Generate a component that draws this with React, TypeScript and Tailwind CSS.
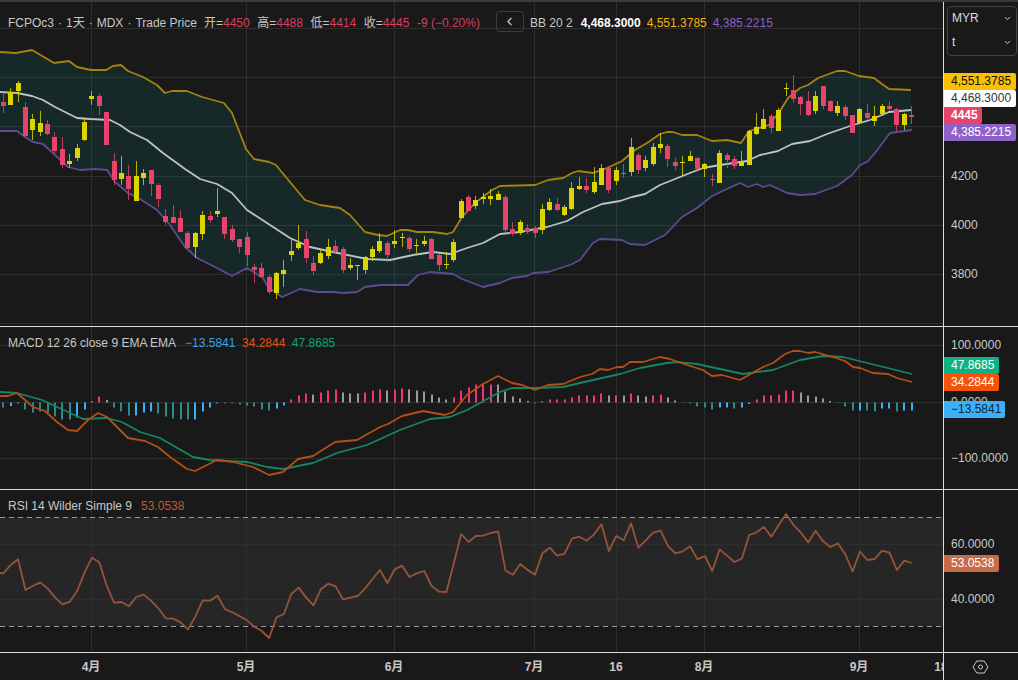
import { ChevronDown, ChevronLeft } from "lucide-react";
import React from "react";

const xAt = (i: number) => 3.3 + 7.385 * i;
const toPath = (pts: number[][]) => pts.map((p) => p.join(",")).join(" ");

// candles: colour, body top, body bottom, wick top, wick bottom (page pixels)
const candles =
  "r102,106,92,113 y92,105,88,105 y83,91,81,102 r107,136,102,137 y119,130,114,140 y123,132,111,136 r124,134,120,135 r137,151,132,154 r149,165,137,168 y161,164,154,168 y148,158,144,161 y122,140,118,141 y96,99,91,105 r96,106,94,115 r112,145,112,145 r161,180,153,185 y173,179,156,185 r176,189,165,200 y176,201,161,201 y173,178,169,185 r170,184,170,196 r185,199,183,207 r216,222,209,225 r217,223,205,223 r218,232,210,232 r233,248,231,249 y233,247,232,258 y215,234,211,240 r216,220,211,223 y211,214,188,217 r217,234,217,239 r229,240,225,242 r239,247,239,253 r237,255,232,266 r267,270,264,283 r268,277,263,277 r277,292,275,294 y273,293,272,299 y270,274,260,287 y251,255,239,261 y243,248,225,250 r239,258,231,263 r263,271,256,275 y253,263,250,264 y247,256,239,259 r246,252,240,253 r249,270,247,273 y265,268,258,270 y265,266,265,280 y257,270,256,274 y249,257,246,261 y241,251,233,253 r243,255,241,262 y241,244,230,248 y237,238,233,247 r238,249,236,252 y245,246,239,253 y241,244,236,246 r239,259,238,259 r255,265,254,271 y264,265,252,269 y242,260,239,262 y201,218,199,218 r197,211,195,211 y200,206,196,209 y197,199,193,204 y196,199,189,205 y194,200,191,200 r197,230,195,232 r229,234,222,236 y222,233,220,235 r228,232,224,234 r228,233,226,238 y209,230,204,234 y202,210,198,211 r204,210,198,211 y207,215,205,216 y188,209,182,210 y186,189,177,190 r186,190,178,193 y182,192,167,194 y168,185,164,185 r168,190,167,193 y170,181,167,185 r173,174,164,178 y147,172,138,176 r155,170,153,174 y160,168,156,171 y147,164,143,166 y144,148,133,153 r146,159,144,167 r162,166,158,170 y162,163,156,176 y156,161,151,161 r158,169,157,170 y164,169,163,177 r179,180,174,186 y153,183,150,183 r155,160,153,168 r159,166,156,169 y162,166,151,166 y131,165,130,165 y127,134,113,135 y119,129,109,129 r116,128,114,133 y110,131,108,131 y88,89,83,96 r90,99,75,103 r97,104,96,115 r101,115,91,116 y96,111,91,114 r86,106,86,109 r101,111,100,112 y106,113,101,116 r107,116,105,120 r115,133,115,133 y109,123,108,123 r113,118,104,120 y116,121,106,126 y106,114,104,116 r106,109,101,111 r109,125,108,132 y114,125,113,130 r115,117,106,124"
    .split(" ")
    .map((c, i) => {
      const [top, bottom, high, low] = c.slice(1).split(",").map(Number);
      return { x: Math.floor(xAt(i)) + 0.5, color: c[0] === "r" ? "#e8436a" : "#dcd400", top, bottom, high, low };
    });

const upper = [[0,52],[16,53],[32,50],[54,63],[69,61],[77,67],[91,70],[106,70],[113,66],[121,65],[128,71],[143,77],[157,85],[165,93],[172,91],[187,91],[202,97],[224,103],[232,113],[246,149],[254,159],[269,162],[276,165],[280,170],[305,200],[320,205],[340,208],[350,215],[365,232],[378,235],[387,236],[400,230],[408,230],[417,232],[433,232],[447,234],[453,232],[462,217],[475,203],[492,190],[500,186],[535,185],[548,180],[563,178],[572,173],[578,171],[593,173],[607,168],[622,161],[635,150],[647,143],[660,134],[667,132],[673,132],[682,135],[697,135],[712,141],[727,140],[741,143],[749,131],[769,125],[780,111],[788,98],[800,88],[808,85],[818,78],[837,71],[845,71],[859,76],[874,78],[882,84],[889,89],[911,90]];
const middle = [[0,92],[17,93],[32,96],[43,100],[55,107],[77,118],[90,119],[110,120],[120,125],[130,132],[147,140],[163,153],[185,169],[200,179],[217,184],[232,193],[247,210],[267,223],[290,238],[310,247],[333,252],[367,259],[390,260],[413,255],[433,252],[450,254],[467,248],[483,243],[500,234],[520,232],[547,227],[567,221],[583,212],[602,204],[620,201],[632,197],[645,194],[660,185],[690,173],[703,168],[720,165],[747,161],[760,155],[778,151],[792,144],[810,141],[827,134],[850,126],[870,120],[889,112],[911,110]];
const lower = [[0,131],[17,131],[25,137],[33,142],[43,144],[55,155],[68,167],[80,170],[95,169],[107,170],[115,182],[128,193],[140,199],[157,210],[170,225],[185,247],[197,258],[217,268],[232,276],[247,268],[263,278],[268,287],[282,297],[300,289],[317,292],[333,292],[343,293],[357,292],[365,287],[380,285],[408,285],[418,275],[430,272],[453,274],[462,279],[483,287],[500,283],[512,278],[527,276],[533,273],[548,272],[570,265],[580,260],[593,243],[600,239],[622,240],[630,244],[645,245],[665,235],[682,217],[697,208],[712,196],[727,189],[740,183],[748,187],[757,184],[763,187],[770,185],[787,193],[800,195],[815,194],[837,186],[852,175],[860,165],[867,162],[875,153],[890,133],[912,130]];

const macdLine = [[0,396],[8,396],[17,393],[25,400],[33,407],[45,411],[57,422],[68,430],[77,431],[88,420],[98,413],[107,417],[117,427],[128,438],[145,441],[158,447],[170,457],[187,469],[195,471],[217,460],[233,462],[253,467],[269,475],[283,472],[298,459],[313,456],[335,442],[357,440],[380,427],[388,424],[402,416],[423,411],[445,415],[453,412],[467,395],[483,384],[498,376],[512,383],[522,385],[535,390],[548,385],[563,384],[580,377],[592,374],[600,369],[608,370],[617,367],[623,367],[630,362],[643,362],[660,357],[670,359],[687,365],[703,370],[712,376],[722,375],[740,380],[763,367],[773,363],[785,354],[793,351],[800,351],[808,353],[815,352],[833,357],[845,361],[853,367],[860,368],[873,373],[888,374],[897,378],[912,382]];
const signalLine = [[0,392],[17,393],[42,400],[55,406],[83,419],[107,418],[122,422],[140,432],[160,438],[193,457],[210,460],[247,462],[267,467],[283,469],[313,463],[337,453],[367,445],[400,430],[430,419],[450,417],[467,410],[500,392],[512,388],[535,388],[563,387],[580,383],[620,374],[640,368],[667,363],[677,362],[697,364],[743,374],[773,370],[800,360],[823,356],[843,357],[912,374]];

const histColors: Record<string, string> = { t: "#2a8a8c", s: "#38b0f8", p: "#f0337a", g: "#9a9a9a" };
const hist =
  "t5 s3.5 s1 t7 t10 t9 t10 t14 t17 t17 s15 s7 p-1.5 p-6 g-2.5 t5 t9 t13 s13 s10 s9 t11 t14 t16 t17 t17 s17 s9 s5 s1 t1 t1 t2 t3 t4 t7 t8 s6 s3 p-3 p-7 p-9 g-8 p-10 p-12 p-13 g-10 g-9 g-9 p-10 p-12 p-13 g-12 p-13 p-14 g-13 g-12 g-11 g-8 g-5 g-3 p-5 p-12 p-15 p-18 p-19 p-18 g-18 g-11 g-6 g-4 g-1.5 t1 p-1.5 p-3 p-3 p-3 p-5 p-7 p-7 p-7 p-9 g-7 p-7 g-7 p-9 g-7 g-6 p-7 p-8 g-5 g-2 t0.5 t1 t4 t5 t7 s5 s5 t6 s5 s1.5 p-3 p-7 p-7 p-8 p-12 p-12 g-10 g-7 g-6 g-4 g-1.5 t0.5 t4 t8 s8 t8 t9 s6 s6 t9 s8 s8"
    .split(" ")
    .map((h, i) => ({ x: Math.round(xAt(i)), color: histColors[h[0]], value: Number(h.slice(1)) }));

const rsiRaw = [250,225,208,300,288,277,295,322,343,335,303,248,203,217,287,338,336,349,321,314,332,355,385,386,397,418,380,331,332,317,357,367,379,391,410,423,444,382,372,312,293,322,346,298,281,289,328,323,318,295,267,240,279,238,227,261,250,243,288,305,306,220,132,156,138,137,129,124,242,254,222,240,254,190,173,197,191,146,140,152,133,103,183,138,151,100,173,151,128,122,168,190,184,169,208,198,243,178,197,216,206,135,127,111,140,105,72,105,128,157,122,154,171,160,192,244,185,210,207,182,188,240,212,219];
const rsiLine = [[0, 573], ...rsiRaw.map((v, i) => [xAt(i), 490 + v / 3])];

const vGrid = [91.5, 246.5, 394.5, 534.5, 616.5, 704.5, 859.5];

const Grid = ({ rows, top, bottom }: { rows: number[]; top: number; bottom: number }) => (
  <g stroke="#2e2e2e" strokeWidth="1">
    {vGrid.map((x) => (
      <line key={x} x1={x} x2={x} y1={top} y2={bottom} />
    ))}
    {rows.map((y) => (
      <line key={y} x1="0" x2="943" y1={y} y2={y} />
    ))}
  </g>
);

const Curve = ({ pts, color }: { pts: number[][]; color: string }) => (
  <polyline points={toPath(pts)} fill="none" stroke={color} strokeWidth="1.8" strokeLinejoin="round" />
);

const AxisText = ({ className, children }: { className: string; children: React.ReactNode }) => (
  <div className={`absolute left-[7px] h-4 leading-4 text-[#c8c8c8] ${className}`}>{children}</div>
);

const Tag = ({ className, children }: { className: string; children: React.ReactNode }) => (
  <div className={`absolute left-0 h-[17px] leading-[17px] pl-[7px] rounded-r-[2px] ${className}`}>{children}</div>
);

const Ohlc = ({ label, value }: { label: string; value: string }) => (
  <span>
    {label}=<span className="text-[#d63f60]">{value}</span>
  </span>
);

export default function App() {
  return (
    <div className="w-[1018px] h-[680px] overflow-hidden flex flex-col bg-[#191919] text-[12px] text-[#c8c8c8] [font-family:'Liberation_Sans','Noto_Sans_CJK_SC',sans-serif]">
      <div className="h-[2px] bg-[#3a3a3a]" />

      {/* price pane */}
      <div className="h-[325px] flex border-b border-[#dddddd]">
        <div className="relative w-[944px] border-r border-[#dddddd]">
          <svg width="943" height="324" viewBox="0 2 943 324" className="block">
            <Grid rows={[28.5, 77.5, 126.5, 176.5, 225.5, 274.5, 323.5]} top={2} bottom={326} />
            <polygon points={toPath([...upper, ...[...lower].reverse()])} fill="#147a84" fillOpacity="0.16" />
            <Curve pts={upper} color="#a5830f" />
            <Curve pts={lower} color="#5e4a90" />
            <Curve pts={middle} color="#b9c5c4" />
            {candles.map((c) => (
              <g key={c.x} fill={c.color}>
                <rect x={c.x - 0.5} y={c.high} width="1" height={c.low - c.high} fillOpacity="0.8" />
                <rect x={c.x - 2.5} y={c.top} width="5" height={Math.max(c.bottom - c.top, 1)} />
              </g>
            ))}
          </svg>
          <div className="absolute left-2 top-[10px] h-[21px] flex items-center whitespace-nowrap">
            <span>FCPOc3</span>
            <span className="mx-1">·</span>
            <span>1天</span>
            <span className="mx-1">·</span>
            <span>MDX</span>
            <span className="mx-1">·</span>
            <span>Trade Price</span>
            <span className="ml-[7px] flex gap-[7.5px]">
              <Ohlc label="开" value="4450" />
              <Ohlc label="高" value="4488" />
              <Ohlc label="低" value="4414" />
              <Ohlc label="收" value="4445" />
              <span className="text-[#d63f60]">-9 (−0.20%)</span>
            </span>
            <button className="ml-4 w-[28px] h-[21px] -translate-y-px flex items-center justify-center rounded-[3px] border border-[#3c3c3c] text-[#d0d0d0]">
              <ChevronLeft size={13} strokeWidth={2} />
            </button>
            <span className="ml-[6px]">BB 20 2</span>
            <span className="ml-2 font-bold text-white">4,468.3000</span>
            <span className="ml-[6px] text-[#f5b70a]">4,551.3785</span>
            <span className="ml-[6px] text-[#8e63c8]">4,385.2215</span>
          </div>
        </div>
        <div className="relative flex-1">
          <div className="absolute left-[3px] top-[4px] w-[70px] h-[50px] flex flex-col gap-1 px-1 py-[1px] rounded-[4px] border border-[#444444] text-[#d8dde5]">
            <div className="flex items-center justify-between h-5">
              <span>MYR</span>
              <ChevronDown size={9} strokeWidth={2.5} />
            </div>
            <div className="flex items-center justify-between h-5">
              <span>t</span>
              <ChevronDown size={9} strokeWidth={2.5} />
            </div>
          </div>
          <AxisText className="top-[166px]">4200</AxisText>
          <AxisText className="top-[215px]">4000</AxisText>
          <AxisText className="top-[264px]">3800</AxisText>
          <Tag className="top-[71px] w-[72px] bg-[#fcc000] text-[#111111]">4,551.3785</Tag>
          <Tag className="top-[88px] w-[72px] bg-white text-[#333333]">4,468.3000</Tag>
          <Tag className="top-[105px] w-[38px] bg-[#e8436a] text-white font-bold">4445</Tag>
          <Tag className="top-[122px] w-[72px] bg-[#8e63c8] text-white">4,385.2215</Tag>
        </div>
      </div>

      {/* macd pane */}
      <div className="h-[163px] flex border-b border-[#dddddd]">
        <div className="relative w-[944px] border-r border-[#dddddd]">
          <svg width="943" height="162" viewBox="0 327 943 162" className="block">
            <Grid rows={[345.5, 402.5, 458.5]} top={327} bottom={489} />
            {hist.map((b) => (
              <rect
                key={b.x}
                x={b.x - 1}
                y={b.value < 0 ? 402.5 + b.value : 402.5}
                width="2"
                height={Math.abs(b.value)}
                fill={b.color}
              />
            ))}
            <Curve pts={signalLine} color="#178562" />
            <Curve pts={macdLine} color="#b34f16" />
          </svg>
          <div className="absolute left-2 top-2 h-4 leading-4 flex gap-[6.5px] whitespace-nowrap">
            <span className="mr-[2.5px]">MACD 12 26 close 9 EMA EMA</span>
            <span className="text-[#3aa0e8]">−13.5841</span>
            <span className="text-[#e2501a]">34.2844</span>
            <span className="text-[#12a074]">47.8685</span>
          </div>
        </div>
        <div className="relative flex-1">
          <AxisText className="top-[10px]">100.0000</AxisText>
          <AxisText className="top-[67px]">0.0000</AxisText>
          <AxisText className="top-[123px]">−100.0000</AxisText>
          <Tag className="top-[30px] w-[55px] bg-[#0fb383] text-white">47.8685</Tag>
          <Tag className="top-[47px] w-[55px] bg-[#f4530c] text-white">34.2844</Tag>
          <Tag className="top-[74px] w-[61px] bg-[#3ab0f9] text-[#10263a]">−13.5841</Tag>
        </div>
      </div>

      {/* rsi pane */}
      <div className="h-[163px] flex border-b border-[#dddddd]">
        <div className="relative w-[944px] border-r border-[#dddddd]">
          <svg width="943" height="162" viewBox="0 490 943 162" className="block">
            <rect x="0" y="517" width="943" height="109" fill="#262626" />
            <Grid rows={[544.5, 599.5]} top={490} bottom={652} />
            <g stroke="#9a9a9a" strokeDasharray="5 4">
              <line x1="0" x2="943" y1="517.5" y2="517.5" />
              <line x1="0" x2="943" y1="626.5" y2="626.5" />
            </g>
            <Curve pts={rsiLine} color="#96543a" />
          </svg>
          <div className="absolute left-2 top-2 h-4 leading-4 flex gap-[9px] whitespace-nowrap">
            <span>RSI 14 Wilder Simple 9</span>
            <span className="text-[#c0593a]">53.0538</span>
          </div>
        </div>
        <div className="relative flex-1">
          <AxisText className="top-[46px]">60.0000</AxisText>
          <AxisText className="top-[101px]">40.0000</AxisText>
          <Tag className="top-[65px] w-[55px] bg-[#c96a48] text-white">53.0538</Tag>
        </div>
      </div>

      {/* time axis */}
      <div className="flex-1 flex">
        <div className="relative w-[944px] border-r border-[#dddddd] overflow-hidden font-bold text-[#c8c8c8]">
          <span className="absolute top-[5px] left-[91px] -translate-x-1/2">4月</span>
          <span className="absolute top-[5px] left-[246px] -translate-x-1/2">5月</span>
          <span className="absolute top-[5px] left-[394px] -translate-x-1/2">6月</span>
          <span className="absolute top-[5px] left-[534px] -translate-x-1/2">7月</span>
          <span className="absolute top-[5px] left-[616px] -translate-x-1/2">16</span>
          <span className="absolute top-[5px] left-[704px] -translate-x-1/2">8月</span>
          <span className="absolute top-[5px] left-[859px] -translate-x-1/2">9月</span>
          <span className="absolute top-[5px] left-[941px] -translate-x-1/2">18</span>
        </div>
        <div className="flex-1 flex items-center justify-center pr-[2px]">
          <svg width="17" height="14" viewBox="0 0 17 14" fill="none" stroke="#c8c8c8" strokeWidth="1">
            <path d="M1 7 L4.8 1 H12.2 L16 7 L12.2 13 H4.8 Z" />
            <circle cx="8.5" cy="7" r="2" />
          </svg>
        </div>
      </div>
    </div>
  );
}
